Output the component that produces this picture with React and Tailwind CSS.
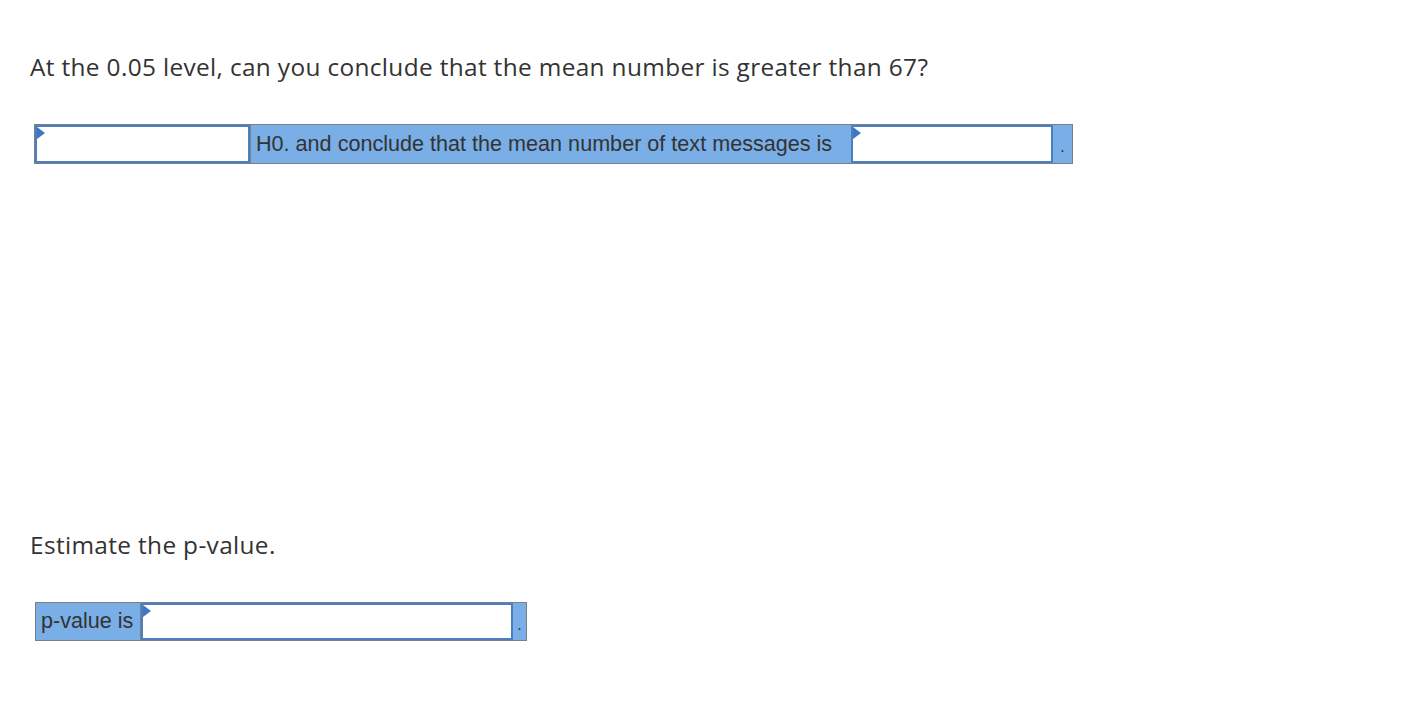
import React from "react";

const Dropdown = ({ className }) => (
  <div className={`relative bg-white border-2 border-[#4a7fc3] ${className}`}>
    <span className="absolute left-0 top-0 w-0 h-0 border-y-[6px] border-y-transparent border-l-[8px] border-l-[#3d78c4]" />
  </div>
);

export default function App() {
  return (
    <div className="min-h-[705px] bg-white text-[#333] px-[30px] pt-[51px]">
      <p className="font-['Open_Sans',sans-serif] text-[24.4px] leading-[32px] tracking-[0.35px]">
        At the 0.05 level, can you conclude that the mean number is greater than 67?
      </p>

      <div className="mt-[41px] ml-[4px] flex w-[1039px] h-[40px] border border-[#7f7f7f] bg-[#7aaee6] font-['Liberation_Sans',Arial,sans-serif] text-[21.6px]">
        <Dropdown className="w-[215px]" />
        <div className="flex items-center border-l border-[#7f7f7f] pl-[5px] w-[601px]">
          H0. and conclude that the mean number of text messages is
        </div>
        <Dropdown className="w-[202px]" />
        <div className="flex-1 flex items-center justify-center pt-[6px] text-[16px]">.</div>
      </div>

      <p className="mt-[365px] font-['Open_Sans',sans-serif] text-[24.4px] leading-[32px] tracking-[0.35px]">
        Estimate the p-value.
      </p>

      <div className="mt-[41px] ml-[5px] flex w-[492px] h-[39px] border border-[#7f7f7f] bg-[#7aaee6] font-['Liberation_Sans',Arial,sans-serif] text-[21.6px]">
        <div className="flex items-center pl-[5px] w-[105px] border-r border-[#7f7f7f]">
          p-value is
        </div>
        <Dropdown className="w-[372px]" />
        <div className="flex-1 flex items-center justify-center pt-[6px] text-[16px]">.</div>
      </div>
    </div>
  );
}
